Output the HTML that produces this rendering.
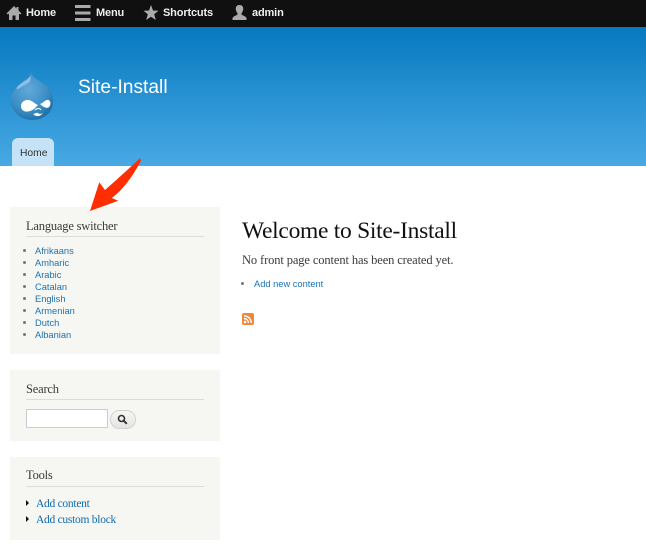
<!DOCTYPE html>
<html><head><meta charset="utf-8"><style>
html,body{margin:0;padding:0;background:#fff}
body{width:646px;height:553px;position:relative;overflow:hidden;font-family:"Liberation Sans",sans-serif}
.a{position:absolute;white-space:nowrap}
.bar{left:0;top:0;width:646px;height:27px;background:#101010}
.tb{top:5px;font-size:11px;line-height:16px;font-weight:bold;color:#eee;letter-spacing:-.15px}
.hd{left:0;top:27px;width:646px;height:139px;background:linear-gradient(#0779bf,#48a9e4)}
.block{left:10px;width:210px;background:#f6f6f2}
.bt{left:26px;font-family:"Liberation Serif",serif;font-size:12.500px;line-height:16px;color:#3b3b3b;letter-spacing:-.2px}
.rule{left:26px;width:178px;height:1px;background:#dcdcd8}
.l{left:35px;font-size:9.300px;line-height:12px;color:#1a73b5;letter-spacing:0}
.d{left:23px;width:3px;height:3px;border-radius:50%;background:#777}
.s{font-family:"Liberation Serif",serif;font-size:11.500px;line-height:16px;color:#0f6cb0;left:36px;letter-spacing:-.27px}
.t{left:26px;width:0;height:0;border-left:3px solid #111;border-top:3px solid transparent;border-bottom:3px solid transparent}
</style></head><body>
<div class="a bar"></div>
<svg class="a" style="left:6px;top:5px" width="16" height="16" viewBox="0 0 16 16"><path d="M8 1L0.500 8.500 2 9.500 3 8.600V15H6.500V10.500H9.500V15H13V8.600L14 9.500 15.500 8.500 12.500 5.500V2H10.500V3.500Z" fill="#aaa"/></svg>
<div class="a tb" style="left:26px">Home</div>
<svg class="a" style="left:75px;top:5px" width="16" height="16" viewBox="0 0 16 16"><path d="M0 0H15.500V3H0ZM0 6.500H15.500V9.500H0ZM0 13H15.500V16H0Z" fill="#aaa"/></svg>
<div class="a tb" style="left:96px">Menu</div>
<svg class="a" style="left:143px;top:5px" width="16" height="16" viewBox="0 0 16 16"><path d="M8 0L10 5.500 15.500 5.700 11.200 9.200 12.800 15 8 11.700 3.200 15 4.800 9.200 0.500 5.700 6 5.500Z" fill="#aaa"/></svg>
<div class="a tb" style="left:163px">Shortcuts</div>
<svg class="a" style="left:232px;top:5px" width="15" height="15" viewBox="0 0 15 15"><path d="M7.500 0C4.500 0 3.500 2 3.800 4.500 4 6.300 5 7.500 5.500 8.200V9.500C4.500 10.500 1.500 11 .5 13V15H14.500V13C13.500 11 10.500 10.500 9.500 9.500V8.200C10 7.500 11 6.300 11.200 4.500 11.500 2 10.500 0 7.500 0Z" fill="#aaa"/></svg>
<div class="a tb" style="left:252px">admin</div>

<div class="a hd"></div>
<svg class="a" style="left:10px;top:72px" width="44" height="49" viewBox="0 0 44 49">
<defs><radialGradient id="g" cx=".42" cy=".35" r=".72"><stop offset="0" stop-color="#62a9da"/><stop offset=".65" stop-color="#3a8dc4"/><stop offset="1" stop-color="#1b6a9f"/></radialGradient></defs>
<path d="M21 .5C22 5 28 8 34 12 40 16 43 23 43 30 43 41 33 48 22 48 11 48 1 40 1 28 1 20 6 15 12 11 16 8.500 20 5.500 21 .5Z" fill="url(#g)"/>
<path d="M20 4C18 8 11 10 7 15 6 17 7 18 9 16.500 12 14 18 12 20 9 21 7 20.500 5 20 4Z" fill="#bcdcf0" opacity=".55"/>
<path d="M11 34C11 30 15 27.500 19 28 23 29 25 32 28 33 26 35 23 39 18 39.500 14 40 11 38 11 34Z" fill="#fff"/>
<path d="M30 32C33 31 36 27 38.500 28 41 29 41 33 39 35 37 37 33 35 30 32Z" fill="#fff"/>
<path d="M23 42C26 45 30 45 33 41 31 42 29 42 28 41 26 40 25 42 23 42Z" fill="#fff"/>
<path d="M25 38C27 36 30 36 31 38" fill="none" stroke="#fff" stroke-width="1"/>
</svg>
<div class="a" style="left:78px;top:75px;font-size:19.200px;line-height:26px;color:#fff">Site-Install</div>
<div class="a" style="left:12px;top:138px;width:42px;height:28px;background:#c5e2f7;border-radius:6px 6px 0 0"></div>
<div class="a" style="left:20px;top:147px;font-size:10.300px;line-height:14px;color:#333">Home</div>

<div class="a block" style="top:207px;height:147px"></div>
<div class="a bt" style="top:218px">Language switcher</div>
<div class="a rule" style="top:236px"></div>
<div class="a d" style="top:249px"></div><div class="a l" style="top:245px">Afrikaans</div>
<div class="a d" style="top:261px"></div><div class="a l" style="top:257px">Amharic</div>
<div class="a d" style="top:273px"></div><div class="a l" style="top:269px">Arabic</div>
<div class="a d" style="top:285px"></div><div class="a l" style="top:281px">Catalan</div>
<div class="a d" style="top:297px"></div><div class="a l" style="top:293px">English</div>
<div class="a d" style="top:309px"></div><div class="a l" style="top:305px">Armenian</div>
<div class="a d" style="top:321px"></div><div class="a l" style="top:317px">Dutch</div>
<div class="a d" style="top:333px"></div><div class="a l" style="top:329px">Albanian</div>

<div class="a block" style="top:370px;height:71px"></div>
<div class="a bt" style="top:381px">Search</div>
<div class="a rule" style="top:399px"></div>
<div class="a" style="left:26px;top:409px;width:80px;height:17px;background:#fff;border:1px solid #ccc"></div>
<div class="a" style="left:110px;top:410px;width:24px;height:17px;border:1px solid #d2d2d2;border-radius:10px;background:linear-gradient(#f6f6f5,#e4e4e2)"></div>
<svg class="a" style="left:117px;top:414px" width="11" height="11" viewBox="0 0 11 11"><circle cx="4.500" cy="4.500" r="3" fill="none" stroke="#333" stroke-width="1.600"/><path d="M6.800 6.800L9.800 9.800" stroke="#333" stroke-width="2"/></svg>

<div class="a block" style="top:457px;height:83px"></div>
<div class="a bt" style="top:467px">Tools</div>
<div class="a rule" style="top:486px"></div>
<div class="a t" style="top:500px"></div><div class="a s" style="top:496px">Add content</div>
<div class="a t" style="top:516px"></div><div class="a s" style="top:512px">Add custom block</div>

<svg class="a" style="left:0;top:150px" width="160" height="70" viewBox="0 150 160 70"><path d="M99.300 182.300L105 190Q122 175 140 158.300L141 160.700Q127 187 111.700 198L118.300 200.700 90 211Z" fill="#ff2d00"/></svg>

<div class="a" style="left:242px;top:217px;font-family:'Liberation Serif',serif;font-size:23.500px;line-height:28px;color:#111;letter-spacing:-.28px">Welcome to Site-Install</div>
<div class="a" style="left:242px;top:252px;font-family:'Liberation Serif',serif;font-size:12.500px;line-height:16px;color:#3b3b3b;letter-spacing:-.12px">No front page content has been created yet.</div>
<div class="a d" style="left:241px;top:282px"></div>
<div class="a l" style="left:254px;top:278px">Add new content</div>
<svg class="a" style="left:242px;top:313px" width="12" height="12" viewBox="0 0 12 12"><rect width="12" height="12" rx="2" fill="#f0883a"/><circle cx="3" cy="9" r="1.300" fill="#fff"/><path d="M2 5.500A4.500 4.500 0 0 1 6.500 10M2 2.800A7.200 7.200 0 0 1 9.200 10" fill="none" stroke="#fff" stroke-width="1.400"/></svg>
</body></html>
